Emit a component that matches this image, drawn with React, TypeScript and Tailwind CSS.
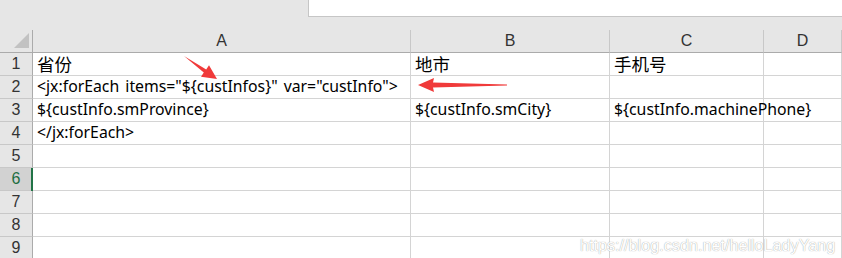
import React from "react";

const cols = ["A", "B", "C", "D"];

const rows: string[][] = [
  ["省份", "地市", "手机号", ""],
  ['<jx:forEach items="${custInfos}" var="custInfo">', "", "", ""],
  ["${custInfo.smProvince}", "${custInfo.smCity}", "${custInfo.machinePhone}", ""],
  ["</jx:forEach>", "", "", ""],
  ["", "", "", ""],
  ["", "", "", ""],
  ["", "", "", ""],
  ["", "", "", ""],
  ["", "", "", ""],
];

const font = "font-['Liberation_Sans','Noto_Sans_CJK_SC',sans-serif]";
const cellFont = "font-['Noto_Sans','Noto_Sans_CJK_SC',sans-serif]";

const isCjk = (t: string) => /[\u4e00-\u9fff]/.test(t);

export default function App() {
  return (
    <div className={`relative h-[258px] w-[842px] overflow-hidden bg-white ${font}`}>
      {/* formula bar strip */}
      <div className="h-[30px] bg-[#e6e6e6]">
        <div className="ml-[308px] h-[17px] border-b border-l border-[#c6c6c6] bg-white" />
      </div>

      <div className="grid grid-cols-[33px_378px_199px_154px_1fr]">
        {/* column headers */}
        <div className="relative h-[23px] border-r border-b border-[#ababab] bg-[#e6e6e6]">
          <div className="absolute left-[14px] top-[3px] h-0 w-0 border-b-[15px] border-l-[15px] border-b-[#c2c2c2] border-l-transparent" />
        </div>
        {cols.map((c) => (
          <div
            key={c}
            className="flex h-[23px] items-center justify-center border-r border-b border-r-[#c8c8c8] border-b-[#ababab] bg-[#e6e6e6] text-[16px] text-[#333]"
          >
            {c}
          </div>
        ))}

        {rows.map((r, i) => (
          <React.Fragment key={i}>
            <div
              className={`relative flex h-[23px] items-center justify-center border-r border-b border-r-[#ababab] border-b-[#c8c8c8] text-[16px] ${
                i === 5 ? "bg-[#d2d2d2] text-[#1e6e42]" : "bg-[#e6e6e6] text-[#333]"
              }`}
            >
              {i + 1}
              {i === 5 && <div className="absolute -right-px top-0 h-[23px] w-[2px] bg-[#217346]" />}
            </div>
            {r.map((t, j) => (
              <div
                key={j}
                className={`flex h-[23px] items-center overflow-visible whitespace-nowrap border-r border-b border-[#d4d4d4] pl-[4px] text-black [word-spacing:2px] ${cellFont} ${
                  isCjk(t) ? "text-[17.5px]" : "text-[15.8px]"
                }`}
              >
                {t}
              </div>
            ))}
          </React.Fragment>
        ))}
      </div>

      {/* annotation arrows */}
      <svg className="absolute left-0 top-0" width="842" height="258">
        <polygon
          points="184,56 206.2,69.4 209,65.3 217,79 201,76.7 203.8,72.6"
          fill="#f03a3a"
        />
        <polygon
          points="418,85 434,78 433,82.5 507,84.5 507,85.5 433,87.5 434,92"
          fill="#f03a3a"
        />
      </svg>

      <div className="absolute left-[580px] top-[233px] text-[16.2px] text-white [text-shadow:0_0_1px_#8a8a8a]">
        https://blog.csdn.net/helloLadyYang
      </div>
    </div>
  );
}
